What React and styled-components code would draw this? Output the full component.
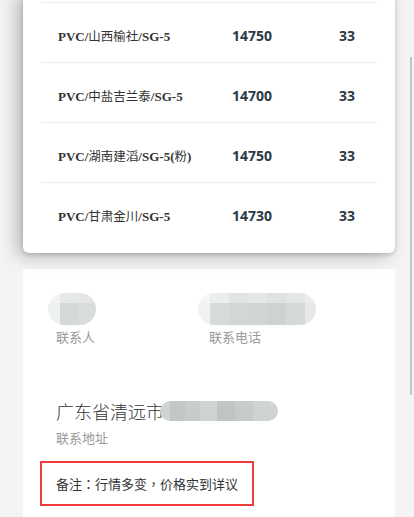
import React from 'react';
import styled, { createGlobalStyle } from 'styled-components';

const GlobalStyle = createGlobalStyle`
    html, body {
        margin: 0;
        padding: 0;
        background: #f4f4f4;
        overflow: hidden;
    }
    body {
        font-family: "Noto Sans CJK SC", "Noto Sans", sans-serif;
    }
`

const Page = styled.div`
    width: 414px;
    height: 517px;
    box-sizing: border-box;
    padding: 0 19px 0 23px;
    overflow: hidden;
`

const PriceCard = styled.div`
    background: #fff;
    border-radius: 6px;
    margin-top: -8px;
    padding: 10px 18px 11px;
    box-shadow: -6px 3px 18px rgba(0,0,0,0.26), 0 2px 4px rgba(0,0,0,0.14);
    position: relative;
`

const Row = styled.div`
    display: grid;
    grid-template-columns: 174px 107px auto;
    align-items: center;
    height: 60px;
    padding: 6px 0 0 17px;
    box-sizing: border-box;
    border-top: 1px solid #ededed;
`

const Name = styled.div`
    font-family: "Liberation Serif", "Noto Sans CJK SC", serif;
    font-weight: bold;
    font-size: 13px;
    color: #333;
    white-space: nowrap;
`

const Cjk = styled.span`
    font-family: "Noto Sans CJK SC", sans-serif;
    font-weight: normal;
    font-size: 12.5px;
`

const Num = styled.div`
    font-family: "Open Sans", "Noto Sans", sans-serif;
    font-weight: bold;
    font-size: 14px;
    color: #2c3a47;
`

const InfoCard = styled.div`
    background: #fff;
    margin-top: 16px;
    height: 260px;
    padding: 24px 0 0 33px;
    box-sizing: border-box;
`

const Contacts = styled.div`
    display: grid;
    grid-template-columns: 153px auto;
`

const Field = styled.div`
    display: flex;
    flex-direction: column;
    align-items: flex-start;
`

const Mosaic = styled.div`
    display: flex;
    height: ${p => p.$h}px;
    margin-left: ${p => p.$shift}px;
    border-radius: ${p => p.$h / 2}px;
    overflow: hidden;
    filter: blur(0.4px);
`

const Cell = styled.div`
    width: ${p => p.$w}px;
    background: linear-gradient(${p => p.$top} 0 30%, ${p => p.$bottom} 30% 100%);
`

const Label = styled.div`
    font-size: 13px;
    line-height: 17px;
    color: #9a9a9a;
    margin-top: ${p => p.$mt || 2}px;
`

const Address = styled.div`
    display: flex;
    align-items: center;
    margin-top: 54px;
    height: 24px;
`

const AddressText = styled.span`
    font-size: 18px;
    font-weight: 300;
    color: #333;
    line-height: 24px;
`

const Note = styled.div`
    display: inline-block;
    margin: 15px 0 0 -16px;
    padding: 12px 14px;
    border: 2px solid #f23c3c;
    font-family: "Noto Sans CJK TC", "Noto Sans CJK SC", sans-serif;
    font-size: 13px;
    line-height: 17px;
    color: #333;
`

const Thumb = styled.div`
    position: fixed;
    right: 2px;
    top: 57px;
    width: 2px;
    height: 338px;
    background: #c4c4c4;
`

const items = [
    { pre: 'PVC/', cjk: '山西榆社', post: '/SG-5', price: 14750, qty: 33 },
    { pre: 'PVC/', cjk: '中盐吉兰泰', post: '/SG-5', price: 14700, qty: 33 },
    { pre: 'PVC/', cjk: '湖南建滔', post: '/SG-5(', tail: '粉', end: ')', price: 14750, qty: 33 },
    { pre: 'PVC/', cjk: '甘肃金川', post: '/SG-5', price: 14730, qty: 33 },
]

const nameBlur = [
    [12, '#f3f4f4', '#eff1f1'],
    [18, '#e6e8e9', '#d6d9da'],
    [18, '#e4e6e7', '#d9dcdd'],
]

const phoneBlur = [
    [12, '#f4f5f5', '#f0f1f1'],
    [19, '#eceeee', '#d7dadb'],
    [19, '#e2e5e5', '#d3d6d7'],
    [19, '#e6e8e8', '#d2d5d6'],
    [19, '#e0e3e3', '#cfd2d3'],
    [19, '#e4e6e6', '#d6d9d9'],
    [11, '#eceeee', '#e6e8e8'],
]

const addrBlur = [
    [10, '#d2d5d6', '#d0d3d4'],
    [15, '#c4c8c9', '#c2c6c7'],
    [15, '#cacdce', '#c8cbcc'],
    [17, '#d1d4d4', '#cfd2d2'],
    [18, '#c2c6c7', '#c0c4c5'],
    [18, '#c9cccd', '#c7cacb'],
    [25, '#d1d4d5', '#cfd2d3'],
]

const Blur = ({ cells, h, shift }) => (
    <Mosaic $h={h} $shift={shift}>
        {cells.map(([w, top, bottom], i) => (
            <Cell key={i} $w={w} $top={top} $bottom={bottom} />
        ))}
    </Mosaic>
)

const App = () => {
    return (
        <Page>
            <GlobalStyle />
            <PriceCard>
                {items.map((it, i) => (
                    <Row key={i}>
                        <Name>
                            {it.pre}<Cjk>{it.cjk}</Cjk>{it.post}
                            {it.tail && <><Cjk>{it.tail}</Cjk>{it.end}</>}
                        </Name>
                        <Num>{it.price}</Num>
                        <Num>{it.qty}</Num>
                    </Row>
                ))}
            </PriceCard>
            <InfoCard>
                <Contacts>
                    <Field>
                        <Blur cells={nameBlur} h={32} shift={-8} />
                        <Label $mt={3}>联系人</Label>
                    </Field>
                    <Field>
                        <Blur cells={phoneBlur} h={32} shift={-11} />
                        <Label $mt={3}>联系电话</Label>
                    </Field>
                </Contacts>
                <Address>
                    <AddressText>广东省清远市</AddressText>
                    <Blur cells={addrBlur} h={20} shift={-4} />
                </Address>
                <Label $mt={6}>联系地址</Label>
                <Note>备注：行情多变，价格实到详议</Note>
            </InfoCard>
            <Thumb />
        </Page>
    )
}

export default App;
